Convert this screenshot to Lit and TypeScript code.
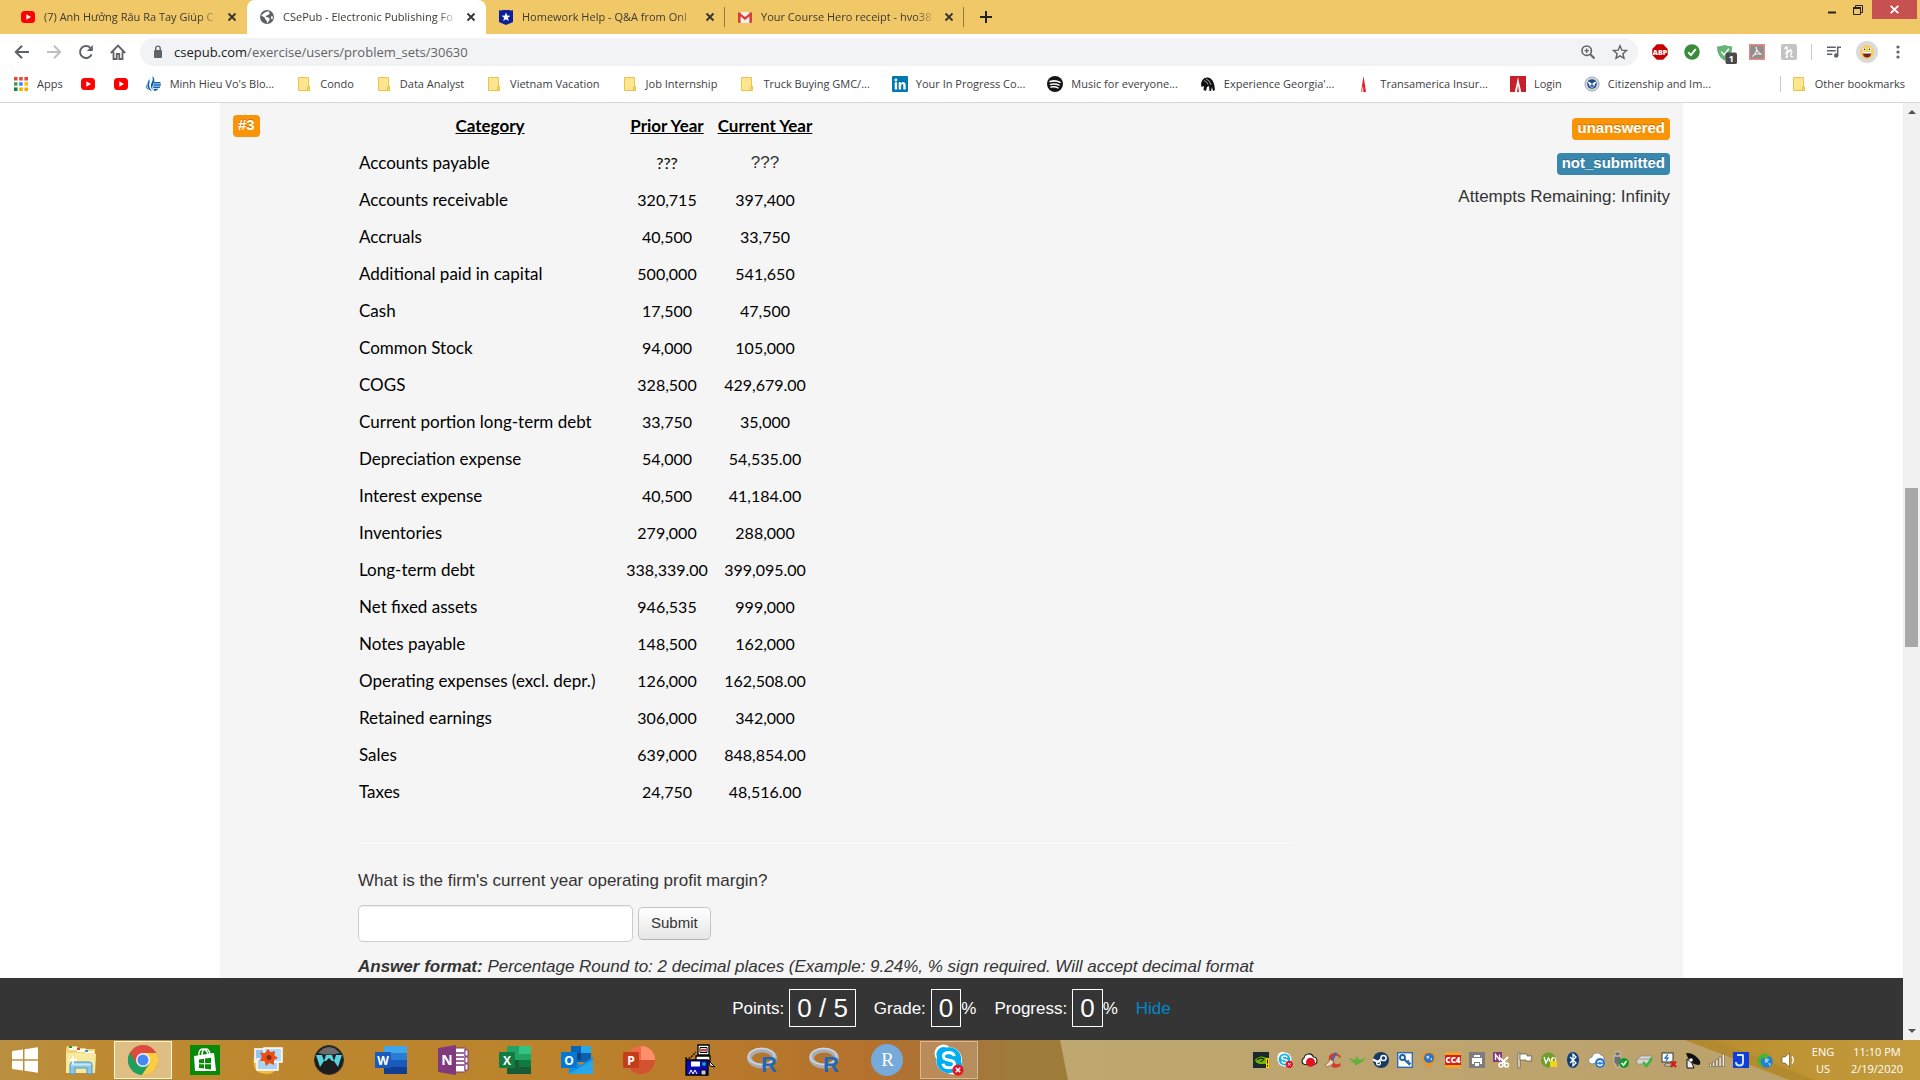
import { LitElement, html, css, svg, nothing, TemplateResult } from "lit";
import { customElement, property } from "lit/decorators.js";

/* ---------- icon drawings ---------- */

type Art = { box: string; art: TemplateResult };
const i = (box: string, art: TemplateResult): Art => ({ box, art });

const ICONS: Record<string, Art> = {
  youtube: i("0 0 16 16", svg`<rect x="1" y="2" width="14" height="12" rx="3.5" fill="#f00"/><path d="M6.3 5.2v5.6L11 8z" fill="#fff"/>`),
  globe: i("0 0 16 16", svg`<circle cx="8" cy="8" r="7" fill="#5f6368"/><path d="M2.2 6.4l3.4 2.2 1 2.2 1.2 1 .4 2.4 2-2.6.6-2L8.600 8.200 6.600 8l1-1.600 2-.6L10.800 4.200 9.600 2.200 6.800 3 4.400 4.600z" fill="#fff"/><path d="M12 7.200l2 .4-.6 3-1.400-1z" fill="#fff"/>`),
  hero: i("0 0 16 16", svg`<path d="M1 1q1.800 1 3.500 0h7q1.700 1 3.500 0v12L8 16l-7-3z" fill="#0b1f9c"/><path d="M8 3.600l1.200 3 3.200.2-2.500 2 .9 3.200L8 10.200 5.200 12l.9-3.200-2.500-2 3.200-.2z" fill="#fff"/>`),
  gmail: i("0 0 16 16", svg`<rect x="1" y="3" width="14" height="11" rx="1" fill="#eee"/><path d="M1 3.600h2.600v10.400H2q-1 0-1-1zM15 3.600h-2.600v10.400H14q1 0 1-1z" fill="#d8402f"/><path d="M1.600 3L8 8l6.400-5 .6 2.600-7 5.400-7-5.400z" fill="#d8402f"/>`),
  close: i("0 0 10 10", svg`<path d="M1.500 1.500l7 7M8.500 1.500l-7 7" stroke="#333" stroke-width="1.800"/>`),
  plus: i("0 0 14 14", svg`<path d="M7 1v12M1 7h12" stroke="#222" stroke-width="2"/>`),
  min: i("0 0 8 8", svg`<path d="M0 6.500h8" stroke="#222" stroke-width="2"/>`),
  restore: i("0 0 10 10", svg`<path d="M2.500 2V.5h7v7H8" fill="none" stroke="#222"/><path d="M.5 2.500h7v7h-7z" fill="none" stroke="#222"/><path d="M0 3h8" stroke="#222" stroke-width="2"/>`),
  winclose: i("0 0 8 8", svg`<path d="M.6.8l6.800 6.400M7.400.8L.6 7.200" stroke="#fff" stroke-width="1.700"/>`),
  back: i("0 0 16 16", svg`<path d="M15 8H2M8 1.800L1.800 8 8 14.200" fill="none" stroke="#5f6368" stroke-width="2"/>`),
  forward: i("0 0 16 16", svg`<path d="M1 8h13M8 1.800L14.200 8 8 14.200" fill="none" stroke="#bdbfc1" stroke-width="2"/>`),
  reload: i("0 0 16 16", svg`<path d="M13.600 10.300A6 6 0 1 1 12.300 3.800" fill="none" stroke="#5f6368" stroke-width="2"/><path d="M14.800 1v6H8.800z" fill="#5f6368"/>`),
  home: i("0 0 16 16", svg`<path d="M3.500 7.500V15h3.200v-5h2.600v5h3.200V7.500M.8 9L8 1.600 15.200 9" fill="none" stroke="#5f6368" stroke-width="1.800"/>`),
  lock: i("0 0 10 14", svg`<rect x="1" y="5" width="8" height="8" rx="1" fill="#5f6368"/><path d="M2.800 5V3.300a2.200 2.200 0 0 1 4.400 0V5" fill="none" stroke="#5f6368" stroke-width="1.400"/>`),
  zoomin: i("0 0 16 16", svg`<circle cx="6.700" cy="6.700" r="4.700" fill="none" stroke="#5f6368" stroke-width="1.600"/><path d="M10.200 10.200L14.500 14.500" stroke="#5f6368" stroke-width="2"/><path d="M6.700 4.500v4.400M4.500 6.700h4.400" stroke="#5f6368" stroke-width="1.300"/>`),
  star: i("0 0 16 16", svg`<path d="M8 1.800l1.800 4.400 4.700.4-3.600 3.100 1.100 4.600L8 11.800 4 14.300l1.100-4.600L1.500 6.600l4.700-.4z" fill="none" stroke="#5f6368" stroke-width="1.400"/>`),
  abp: i("0 0 18 18", svg`<path d="M5.500.3h7l5.200 5.200v7l-5.200 5.200h-7L.3 12.500v-7z" fill="#c80000"/><text x="9" y="12" font-family="Open Sans, sans-serif" font-size="8" font-weight="800" text-anchor="middle" fill="#fff">ABP</text>`),
  check: i("0 0 18 18", svg`<circle cx="9" cy="9" r="8.700" fill="#3a8a3a"/><path d="M4.800 9.400l3 3 5.400-6.600" fill="none" stroke="#fff" stroke-width="2.200"/>`),
  shield: i("0 0 22 22", svg`<path d="M1 2.500Q5.500 2.500 9 1q3.500 1.500 8 1.500Q17 13 9 17.500 1 13 1 2.500z" fill="#67b279"/><path d="M5.500 8l3 3.500 5-6.500" fill="none" stroke="#fff" stroke-width="1.500"/><rect x="10" y="9" width="12" height="12" rx="2" fill="#4a4a4a"/><text x="16" y="18.500" font-family="Open Sans, sans-serif" font-size="10" font-weight="700" text-anchor="middle" fill="#fff">1</text>`),
  pdf: i("0 0 16 16", svg`<rect x=".7" y=".7" width="14.600" height="14.600" fill="#8f8f8f" stroke="#e88a7d" stroke-width="1.400"/><path d="M3.500 12.500C6 11 8.500 6 7.500 3.500 6.500 3 7 7 12.500 10.500 10 9 5.500 10 3.500 12.500z" fill="none" stroke="#f6e3e0" stroke-width="1.200"/>`),
  honey: i("0 0 16 16", svg`<rect width="16" height="16" rx="2" fill="#c3c3c3"/><path d="M6 13V3q-1.500 0-2.500 2M6 8.500q2.500-3.500 4.300-1.700 1 1.200-.6 4.200-.6 2.200 2.300 1.500M4 9.500q4-.5 6-4.500M4.500 13H7" fill="none" stroke="#fff" stroke-width="1.400"/>`),
  queue: i("0 0 18 16", svg`<path d="M1 2.500h10M1 6.500h10M1 10.500h6" stroke="#5f6368" stroke-width="1.800"/><circle cx="11.500" cy="12" r="2.500" fill="#5f6368"/><path d="M13.200 12V2.500H17" fill="none" stroke="#5f6368" stroke-width="1.800"/>`),
  face: i("0 0 22 22", svg`<circle cx="11" cy="11" r="11" fill="#dadada"/><circle cx="11" cy="11" r="7" fill="#f7cf5b"/><circle cx="8.300" cy="8.200" r="1.700" fill="#fff"/><circle cx="13.700" cy="8.200" r="1.700" fill="#fff"/><circle cx="8.500" cy="8.400" r=".8" fill="#333"/><circle cx="13.500" cy="8.400" r=".8" fill="#333"/><path d="M6.300 11h9.400q-.7 5.500-4.700 5.500T6.300 11z" fill="#7a2320"/><path d="M6.300 11h9.400v1.500H6.500z" fill="#fff"/>`),
  dots: i("0 0 4 16", svg`<circle cx="2" cy="3" r="1.600" fill="#5f6368"/><circle cx="2" cy="8" r="1.600" fill="#5f6368"/><circle cx="2" cy="13" r="1.600" fill="#5f6368"/>`),
  apps: i("0 0 16 16", svg`<g transform="translate(1 1)"><path d="M0 0h3.500v3.500H0zM5.200 0h3.500v3.500H5.200zM10.400 0H14v3.500h-3.600z" fill="#ea4335"/><path d="M0 5.200h3.500v3.500H0z" fill="#34a853"/><path d="M5.200 5.200h3.500v3.500H5.200z" fill="#4285f4"/><path d="M10.400 5.200H14v3.500h-3.600z" fill="#fbbc05"/><path d="M0 10.400h3.500V14H0z" fill="#188038"/><path d="M5.200 10.400h3.500V14H5.200zM10.400 10.400H14V14h-3.600z" fill="#f9ab00"/></g>`),
  gsu: i("0 0 16 16", svg`<path d="M6.500 0q3.500 3.500.5 8.500-1 2-.5 5.500Q3.800 10.500 5.500 7 7.500 3.500 6.500 0z" fill="#0b5fae"/><path d="M3.300 3q.8 2-.1 5Q2.500 11 6 15.500 1.500 13.500 1.300 9 1.300 6.500 3.300 3z" fill="#0b5fae"/><path d="M1 7Q-.5 11 3 14 0 13 0 10z" fill="#0b5fae"/><path d="M8 6h6.500v1.500H7.600zM7.400 8.200H15q0 1-.3 1.500H7.200zM7.200 10.500h7.200q-.4 1-1 1.500H7.400zM7.600 12.800H12.600q-2 2.200-4.600 2.200z" fill="#0b5fae"/>`),
  folder: i("0 0 16 16", svg`<path d="M2.500 1.500h10v9h1v4h-11z" fill="#fde68f" stroke="#e9c34a"/><path d="M11.500 14.500v-3q0-1 1-1t1 1v3z" fill="#fbd55a" stroke="#e9c34a"/>`),
  linkedin: i("0 0 16 16", svg`<rect width="16" height="16" rx="1" fill="#0077b5"/><circle cx="3.900" cy="4" r="1.400" fill="#fff"/><path d="M2.700 6.300h2.400v7.200H2.700zM6.700 6.300H9v1q2-2 3.800-.6.900.8.900 2.500v4.300h-2.400V9.600q0-1.500-1-1.500T9.100 9.600v3.900H6.700z" fill="#fff"/>`),
  spotify: i("0 0 16 16", svg`<circle cx="8" cy="8" r="8" fill="#191414"/><path d="M3 5.500q5.500-1.600 10 .9M3.500 8.400q4.700-1.300 8.500.8M4 11q3.800-.9 7 .8" fill="none" stroke="#fff" stroke-width="1.500" stroke-linecap="round"/>`),
  rugby: i("0 0 16 16", svg`<path d="M1 8Q2 1 8 1.500 14 2 15 14l-2 1-1-4-1 4H9.500L9 10l-2 1-1 4-2.500-1L4 10 1.500 11z" fill="#111"/><path d="M6 3q4 1 5 6M4 4.500q3 1 4 4" fill="none" stroke="#fff" stroke-width=".6"/>`),
  spire: i("0 0 16 16", svg`<path d="M7.500 0L10 16H5z" fill="#e21a22"/><path d="M7 9.500L7.600 16H5z" fill="#f7b5b5"/>`),
  login: i("0 0 16 16", svg`<rect width="16" height="16" fill="#c5202b"/><path d="M8 1l1.200 6 2 9H9L8 9l-1 7H4.800l2-9z" fill="#fff"/>`),
  seal: i("0 0 16 16", svg`<circle cx="8" cy="8" r="7.500" fill="#d5d9df"/><circle cx="8" cy="8" r="7" fill="none" stroke="#a7afbb"/><circle cx="8" cy="8" r="4.800" fill="#1f4b86"/><path d="M3.500 5.500q3 0 4.500 2.500 1.500-2.500 4.500-2.500L10 10.500l-2 1.800-2-1.800z" fill="#fff"/><path d="M6.500 8.500h3v2L8 11.800l-1.500-1.300z" fill="#2f5f9c"/>`),

  windows: i("0 0 28 26", svg`<path d="M1 4l11-1.600V12.300H1zM13.500 2.200L27 .3v12H13.500zM1 13.700h11v9.900L1 22zM13.500 13.700H27v12L13.500 23.800z" fill="#fff"/>`),
  explorer: i("0 0 32 32", svg`<path d="M1 5l1-3h10l1 2h7l1 1h9v23H1z" fill="#eed676"/><path d="M4 3h8v3H4zM12 5h9v3h-9zM20 7h9v3h-9z" fill="#fffef0"/><path d="M4 2h3v2H4z" fill="#1a9a48"/><path d="M12 4h3v2h-3z" fill="#d24a2a"/><path d="M20 6h3v2h-3z" fill="#2f8fe0"/><path d="M1 9h29l1 2-1 18H1z" fill="#f8e9a0"/><path d="M5 30V21q0-3 3-3h16q3 0 3 3v9h-5v-6H10v6z" fill="#8cc7e6" stroke="#4c9ac4"/><path d="M6 19.500h20v2H6z" fill="#c9e8f7"/><path d="M8 12v8M4 16h8" stroke="#fff" stroke-width="1.500"/>`),
  chrome: i("0 0 32 32", svg`<circle cx="16" cy="16" r="15" fill="#dd4b3e"/><path d="M3 8.500L9.500 20 16 31A15 15 0 0 1 3 8.500z" fill="#1aa15f"/><path d="M9 18l13.500 1.500L15 31z" fill="#1aa15f"/><path d="M16 9h13.300A15 15 0 0 1 15 31l7.500-11.500z" fill="#ffcd42"/><circle cx="16" cy="16" r="7" fill="#f4f4f4"/><circle cx="16" cy="16" r="5.500" fill="#4587f4"/>`),
  store: i("0 0 32 32", svg`<rect x="1" y="1" width="30" height="30" fill="#078a07"/><path d="M5 12l20-3 2 18H6z" fill="#fff"/><path d="M10 13q-1-8 4-8 3 0 5 5M13 11q0-6 4-6 3 0 4 5" fill="none" stroke="#fff" stroke-width="1.500"/><path d="M10 15.500l5-.7v4.400h-5zM16 14.600l6-.8v5.400h-6zM10 20.200h5v4.300l-5-.5zM16 20.200h6v5.300l-6-.8z" fill="#078a07"/>`),
  gallery: i("0 0 32 32", svg`<path d="M3 14q-3 15 12 16 8 0 10-5-15 5-18-10z" fill="#f7b944"/><rect x="4" y="5" width="16" height="13" fill="#8ec6f0" stroke="#fff" stroke-width="1.500"/><rect x="6" y="15" width="21" height="11" fill="#a9d3ef" stroke="#fff" stroke-width="1.500"/><rect x="13" y="4" width="18" height="14" fill="#b9dcf5" stroke="#fff" stroke-width="1.500"/><path d="M17 5l2.500 3L24 7l-.5 4.500L27 14l-4 2 0 5-4.500-2-3.500 3-1.500-4.500-5-1L11 13 9 8.500l5 .5z" fill="#e8501c"/><circle cx="18" cy="13.500" r="2.500" fill="#8c2a0c"/>`),
  wave: i("0 0 32 32", svg`<circle cx="16" cy="16" r="14.500" fill="#1d1d1d" stroke="#333"/><path d="M5 9q11-12 22 0-11 3-22 0z" fill="#6b6b6b"/><path d="M3 11h6l2 6 2-6h6l2 6 2-6h6l-4 12-4-6-2 0-3-3-3 3-2 0-4 6z" fill="#58d2de"/>`),
  word: i("0 0 32 32", svg`<rect x="9" y="2" width="23" height="7" fill="#41a5ee"/><rect x="9" y="9" width="23" height="7" fill="#2b7cd3"/><rect x="9" y="16" width="23" height="7" fill="#185abd"/><rect x="9" y="23" width="23" height="7" fill="#103f91"/><rect y="8" width="16" height="16" rx="1" fill="#185abd"/><text x="8" y="20.500" font-family="Open Sans, sans-serif" font-size="12" font-weight="700" text-anchor="middle" fill="#fff">W</text>`),
  onenote: i("0 0 32 32", svg`<path d="M17 4h11v24H17z" fill="#fff" stroke="#80397b"/><path d="M19 9h8M19 13h8M19 17h8M19 21h8" stroke="#80397b" stroke-width="1.500"/><path d="M28 6h3v6h-3zM28 13h3v6h-3zM28 20h3v6h-3z" fill="#fff" stroke="#80397b"/><path d="M1 4l18-3v30L1 28z" fill="#80397b"/><text x="10" y="21" font-family="Open Sans, sans-serif" font-size="14" font-weight="700" text-anchor="middle" fill="#fff">N</text>`),
  excel: i("0 0 32 32", svg`<rect x="8" y="2" width="24" height="28" fill="#21a366"/><rect x="20" y="2" width="12" height="8" fill="#33c481"/><rect x="8" y="16" width="12" height="14" fill="#185c37"/><rect x="20" y="16" width="12" height="7" fill="#107c41"/><rect x="20" y="23" width="12" height="7" fill="#185c37"/><rect y="8" width="16" height="16" rx="1" fill="#107c41"/><text x="8" y="20.500" font-family="Open Sans, sans-serif" font-size="12" font-weight="700" text-anchor="middle" fill="#fff">X</text>`),
  outlook: i("0 0 32 32", svg`<path d="M10 2h20v16H10z" fill="#0364b8"/><path d="M20 2h10v7H20z" fill="#28a8ea"/><path d="M10 9h10v7H10z" fill="#14447d"/><path d="M20 9h10v7H20z" fill="#0a5fb0"/><path d="M8 13l12 8 12-8v17H8z" fill="#1490df"/><path d="M8 30l24-14v14z" fill="#28a8ea"/><rect y="8" width="16" height="16" rx="1" fill="#0078d4"/><text x="8" y="20.500" font-family="Open Sans, sans-serif" font-size="12" font-weight="700" text-anchor="middle" fill="#fff">O</text>`),
  powerpoint: i("0 0 32 32", svg`<circle cx="18" cy="16" r="14" fill="#ed6c47"/><path d="M18 2a14 14 0 0 1 14 14H18z" fill="#ff8f6b"/><path d="M4 16h28a14 14 0 0 1-28 0z" fill="#d35230"/><rect y="8" width="16" height="16" rx="1" fill="#c43e1c"/><text x="8" y="20.500" font-family="Open Sans, sans-serif" font-size="12" font-weight="700" text-anchor="middle" fill="#fff">P</text>`),
  terminal: i("0 0 32 32", svg`<path d="M13 1h11v10H13zM11 12h14v5H11z" fill="#fff" stroke="#000" stroke-width="1.300"/><path d="M15 3.500h7v5h-7z" fill="#fff" stroke="#000"/><path d="M16 5h5v2.500h-5z" fill="#e03a3a"/><path d="M1 13v3l5-3 5-5" fill="none" stroke="#000" stroke-width="1.300" stroke-dasharray="2 1"/><path d="M1 16h22v15H1z" fill="#0b0bb0" stroke="#000" stroke-width="1.300"/><path d="M6 17.500h9v5H6z" fill="#fff"/><circle cx="19" cy="20" r="2" fill="#0aa"/><path d="M4 30l2-4 2 4 2-4 2 4" stroke="#fff" fill="none"/><path d="M16 26h5v5h-5z" fill="#ccc" stroke="#000"/><path d="M24 17l6 6-5-1z" fill="#fff" stroke="#000"/>`),
  rlang: i("0 0 32 32", svg`<ellipse cx="15" cy="14" rx="12.500" ry="8" fill="none" stroke="#a9adb5" stroke-width="5"/><ellipse cx="14.500" cy="12.500" rx="13" ry="8" fill="none" stroke="#d6d9dd" stroke-width="1.500"/><text x="22" y="28" font-family="Liberation Sans, sans-serif" font-size="22" font-weight="700" text-anchor="middle" fill="#2266b8">R</text>`),
  rstudio: i("0 0 32 32", svg`<circle cx="16" cy="16" r="16" fill="#75aadb"/><text x="16.500" y="22" font-family="Liberation Serif, serif" font-size="19" text-anchor="middle" fill="#fff">R</text>`),
  skype: i("0 0 32 32", svg`<circle cx="10.500" cy="9.500" r="9" fill="#fff"/><circle cx="20" cy="21" r="9.500" fill="#fff"/><circle cx="16" cy="16" r="13" fill="#fff"/><path d="M5 6a7 7 0 0 1 8-2.500A12.300 12.300 0 0 1 28 18a7 7 0 0 1-9 10.500A12.300 12.300 0 0 1 4 13a7 7 0 0 1 1-7z" fill="#00aff0"/><path d="M21.500 12Q20 8.500 15.500 8.500q-5 .3-5 3.800 0 3 5 3.700 6 .8 6 4-.2 3.800-5.500 3.800t-6-4" fill="none" stroke="#fff" stroke-width="3"/><circle cx="25" cy="26" r="5.500" fill="#e81123"/><path d="M22.800 23.800l4.400 4.400M27.200 23.800l-4.400 4.400" stroke="#fff" stroke-width="1.500"/>`),

  nvidia: i("0 0 16 16", svg`<rect width="16" height="16" fill="#1b2a2e"/><path d="M2 8q5-6 12-2v6H7Q3 11.500 2 8z" fill="#76b900"/><path d="M4 8q3-3 7-1-2 3-4 2" fill="none" stroke="#12300a" stroke-width="1.200"/><path d="M13 6h3v10h-3z" fill="#ffd200"/><path d="M14 7.500h1v4h-1zM14 13h1v1.500h-1z" fill="#111"/>`),
  skypesmall: i("0 0 16 16", svg`<circle cx="5.500" cy="5" r="5" fill="#fff"/><circle cx="7.500" cy="7.500" r="7" fill="#fff"/><circle cx="7.500" cy="7.500" r="5.900" fill="#1fb1ea"/><path d="M10.300 5.500Q9.500 4 7.500 4 5 4.200 5 5.700t2.500 1.700q3 .3 2.900 2Q10.200 11 7.700 11T4.800 9.400" fill="none" stroke="#fff" stroke-width="1.500"/><circle cx="12.300" cy="12.300" r="3.600" fill="#e81123"/><path d="M11 11l2.700 2.700M13.700 11L11 13.700" stroke="#fff"/>`),
  cloud: i("0 0 16 16", svg`<path d="M3.500 12.500a3.500 3.500 0 0 1-.5-6.500A5 5 0 0 1 12.500 5a3.800 3.800 0 0 1 .5 7.500z" fill="#fff" stroke="#222" stroke-width="1.200"/><circle cx="9.500" cy="10.300" r="4.500" fill="#e0121c"/>`),
  cleaner: i("0 0 16 16", svg`<path d="M15.500 4Q11-1 6 2T7 15q4 2 8.500-1v-3q-4 2.500-6 0T9.500 5t6 1.500z" fill="#d63a2c"/><path d="M10.500 0l1.500 1L8 9 6.500 7.500z" fill="#2f6fc0"/><path d="M0 13q4-2 5-6l4 3q-2 4-7 5z" fill="#e8d9c4" stroke="#8a5a2a" stroke-width=".7"/>`),
  genie: i("0 0 16 16", svg`<path d="M0 6q3 0 5 2l2-1.500V5h2v1.500L11 8q2-.5 5-2.500-1 4-4 5L9 12v1H6v-1L3 9.500z" fill="#5fb33a"/>`),
  steam: i("0 0 16 16", svg`<circle cx="8" cy="8" r="8" fill="#153a66"/><circle cx="10.500" cy="6" r="2.600" fill="none" stroke="#fff" stroke-width="1.500"/><circle cx="5.500" cy="11" r="1.900" fill="none" stroke="#fff" stroke-width="1.300"/><path d="M0 7.500l5 2.500 3-3" fill="none" stroke="#fff" stroke-width="2"/>`),
  key: i("0 0 16 16", svg`<rect x=".7" y=".7" width="14.600" height="14.600" fill="#fff" stroke="#2f6fb0" stroke-width="1.400"/><circle cx="5.500" cy="5.500" r="2.500" fill="none" stroke="#1d5ea6" stroke-width="1.800"/><path d="M7 7l6 6M10 10l2-1.500M12 12l1.500-1.500" stroke="#1d5ea6" stroke-width="1.800"/>`),
  pin: i("0 0 16 16", svg`<path d="M8 16L2.500 9.500a6.700 6.700 0 1 1 11 0z" fill="#f0931e"/><circle cx="8" cy="6" r="5" fill="#2f74c0"/><path d="M5 4.500l2.500-1 1 2-2 1.500zM9 7l2-1v2.500z" fill="#bfe0f5"/>`),
  cc4: i("0 0 16 16", svg`<rect width="16" height="16" fill="#d61c14"/><path d="M0 0h16v3H0zM0 13h16v3H0z" fill="#f0a52c"/><text x="8" y="11" font-family="Open Sans, sans-serif" font-size="8" font-weight="800" text-anchor="middle" fill="#fff">CC4</text>`),
  printer: i("0 0 16 16", svg`<rect width="16" height="16" fill="#7d7d7d"/><path d="M5 3h6v2H5zM3 6h10v6h-2v-2H5v2H3zM6 11h4v3H6z" fill="#fff"/>`),
  clip: i("0 0 16 16", svg`<rect width="9" height="10" fill="#80397b"/><path d="M2.500 8V2.500L6.500 8V2.500" fill="none" stroke="#fff" stroke-width="1.300"/><path d="M7 6l6 6M15 5l-6 6" stroke="#fff" stroke-width="2"/><circle cx="8" cy="13" r="2" fill="none" stroke="#fff" stroke-width="1.500"/><circle cx="13.500" cy="13" r="2" fill="none" stroke="#fff" stroke-width="1.500"/>`),
  flag: i("0 0 16 16", svg`<path d="M1 1h2v15H1z" fill="#fff" stroke="#4a4030" stroke-width=".6"/><path d="M3 2h7v2h5l-1 3 1 2H9V8H3z" fill="#fff" stroke="#4a4030" stroke-width=".6"/>`),
  webroot: i("0 0 16 16", svg`<circle cx="7.500" cy="8" r="7.500" fill="#6a9e28"/><path d="M3 5l2 6 2.500-5L10 11l2-6" fill="none" stroke="#fff" stroke-width="1.300"/><path d="M9 9h7v6H9z" fill="#f2d21c"/><path d="M10.500 9V7.500a2 2 0 0 1 4 0V9" fill="none" stroke="#f5f5d0" stroke-width="1.200"/>`),
  bluetooth: i("0 0 16 16", svg`<ellipse cx="8" cy="8" rx="6" ry="8" fill="#0d3f7c"/><path d="M5 5l6 6-3 2.700V2.300L11 5l-6 6" fill="none" stroke="#fff" stroke-width="1.300"/>`),
  sync: i("0 0 16 16", svg`<path d="M3 12a3.500 3.500 0 0 1 0-7 5 5 0 0 1 9-2 3.500 3.500 0 0 1 2 6z" fill="#fff" stroke="#777" stroke-width=".8"/><circle cx="11" cy="11" r="5" fill="#2d7ad0"/><path d="M8.500 10.500q2.500-3 5 0M13.500 12q-2.500 3-5 0" fill="none" stroke="#fff" stroke-width="1.300"/>`),
  usb: i("0 0 16 16", svg`<path d="M2 0h5v4H2zM1 4h7v7q0 1-2 1v3H3v-3q-2 0-2-1z" fill="#6f6f6f" stroke="#ddd" stroke-width=".6"/><circle cx="11" cy="11" r="5" fill="#159a2c"/><path d="M8.500 11l2 2 3-4" fill="none" stroke="#fff" stroke-width="1.500"/>`),
  drive: i("0 0 16 16", svg`<path d="M0 7l4-3h11l-2 3v5H0z" fill="#d9d9d9" stroke="#888" stroke-width=".7"/><path d="M0 7h13" stroke="#888" stroke-width=".8"/><path d="M6 10l3.500 4L15 6" fill="none" stroke="#3cb53c" stroke-width="2.500"/>`),
  power: i("0 0 16 16", svg`<rect x="1" y="1" width="11" height="9" fill="#fff" stroke="#333"/><path d="M7 2.500l-3 3.500h3L5 9" fill="none" stroke="#1a78d0" stroke-width="1.300"/><path d="M4 12h6v2H4z" fill="#fff" stroke="#333" stroke-width=".7"/><path d="M10 9.500l5 5.500M15 9.500L10 15" stroke="#d11" stroke-width="2"/>`),
  dish: i("0 0 16 16", svg`<path d="M1 1q8-1 14 8 1 4-2 4-9-1-12-12z" fill="#111"/><path d="M2 7l5 4 2 5H2z" fill="#eee" stroke="#111"/><circle cx="6" cy="8" r="1.800" fill="#fff"/>`),
  signal: i("0 0 16 16", svg`<path d="M.5 12h2v2.500h-2zM3.700 10h2v4.500h-2zM6.900 7.500h2v7h-2zM10.100 5h2v9.500h-2zM13.300 2h2v12.500h-2z" fill="#fff" stroke="#4a3c20" stroke-width=".5"/>`),
  jtool: i("0 0 16 16", svg`<rect width="16" height="16" fill="#0f3fd8"/><path d="M4 3h6.500M10 3v7q0 3.500-3.500 3.500T3 10" fill="none" stroke="#cfe3ff" stroke-width="2"/>`),
  earth: i("0 0 16 16", svg`<circle cx="9.500" cy="9.500" r="6.300" fill="#2580d0"/><path d="M8 6l4 1-1 3-3 1zM11 11l3 .5-1 3z" fill="#8fd0f5"/><path d="M4 14.500Q-1 10 1 6q2-4 6-4V0l5 4-5 4V5.500Q4 6 3.500 9q0 3 2.500 5z" fill="#46b52c"/>`),
  speaker: i("0 0 16 16", svg`<path d="M1 5h3l4.500-4v14L4 11H1z" fill="#fff" stroke="#5a4a28" stroke-width=".6"/><path d="M11 4.500q2.500 3.500 0 7" fill="none" stroke="#fff" stroke-width="1.400"/>`),
  up: i("0 0 8 4", svg`<path d="M0 4l4-4 4 4z" fill="#505050"/>`),
  down: i("0 0 8 4", svg`<path d="M0 0l4 4 4-4z" fill="#505050"/>`),
};

@customElement("ui-icon")
class UiIcon extends LitElement {
  @property() name = "";
  @property({ type: Number }) size = 16;
  static styles = css`
    :host { display: block; flex: none; }
    svg { display: block; overflow: visible; }
  `;
  render() {
    const icon = ICONS[this.name];
    if (!icon) return nothing;
    const [, , w, h] = icon.box.split(" ").map(Number);
    return html`<svg width=${this.size} height=${Math.round((this.size * h) / w)} viewBox=${icon.box} aria-hidden="true">${icon.art}</svg>`;
  }
}

/* ---------- browser window ---------- */

const TABS = [
  { icon: "youtube", title: "(7) Anh Hưởng Râu Ra Tay Giúp C" },
  { icon: "globe", title: "CSePub - Electronic Publishing Fo", active: true },
  { icon: "hero", title: "Homework Help - Q&A from Onl" },
  { icon: "gmail", title: "Your Course Hero receipt - hvo38" },
];

const BOOKMARKS = [
  { icon: "apps", label: "Apps" },
  { icon: "youtube", label: "" },
  { icon: "youtube", label: "" },
  { icon: "gsu", label: "Minh Hieu Vo's Blo..." },
  { icon: "folder", label: "Condo" },
  { icon: "folder", label: "Data Analyst" },
  { icon: "folder", label: "Vietnam Vacation" },
  { icon: "folder", label: "Job Internship" },
  { icon: "folder", label: "Truck Buying GMC/..." },
  { icon: "linkedin", label: "Your In Progress Co..." },
  { icon: "spotify", label: "Music for everyone..." },
  { icon: "rugby", label: "Experience Georgia'..." },
  { icon: "spire", label: "Transamerica Insur..." },
  { icon: "login", label: "Login" },
  { icon: "seal", label: "Citizenship and Im..." },
];

@customElement("browser-chrome")
class BrowserChrome extends LitElement {
  static styles = css`
    :host { display: block; font: 11px/16px "Open Sans", sans-serif; color: #3c4043; background: #fff; border-bottom: 1px solid #d6d6d6; }
    button { border: 0; padding: 0; background: none; display: grid; place-items: center; flex: none; }
    a { color: inherit; text-decoration: none; }
    .strip { display: flex; height: 34px; background: #f0c868; padding-left: 8px; }
    .tab { display: flex; align-items: center; width: 239px; box-sizing: border-box; padding: 0 10px 0 12px; gap: 8px; position: relative; color: #3c3a33; }
    .tab.line::after { content: ""; position: absolute; right: 0; top: 7px; height: 20px; width: 1px; background: #8f7a48; }
    .tab.active { background: #fff; border-radius: 8px 8px 0 0; }
    .title { flex: 1; white-space: nowrap; mask-image: linear-gradient(to left, transparent, #000 20px); }
    .tab button { width: 10px; }
    .new { width: 44px; }
    .window { margin-left: auto; display: flex; align-items: flex-start; padding-right: 3px; }
    .window button { width: 26px; height: 19px; }
    .window .x { width: 45px; background: #c75050; margin-left: 1px; }
    .tools { display: flex; align-items: center; height: 36px; padding: 0 20px 0 14px; }
    .nav { display: flex; gap: 16px; margin-right: 14px; }
    .omni { flex: 1; display: flex; align-items: center; gap: 11px; height: 28px; border-radius: 14px; background: #f1f3f4; padding: 0 10px 0 13px; }
    .field { flex: 1; display: grid; font-size: 13px; line-height: 20px; }
    .field input, .field span { grid-area: 1 / 1; padding: 0; font: inherit; }
    .field input { border: 0; background: none; outline: 0; }
    .field span { color: #5f6368; pointer-events: none; }
    .field b { font-weight: 400; color: #202124; }
    .omni .right { display: flex; gap: 16px; }
    .ext { display: flex; align-items: center; gap: 16px; margin-left: 14px; }
    .ext .wide { margin: 4px -4px 0 0; }
    .ext .bar { margin: 0 -2px; }
    .ext .avatar { margin: 0 2px 0 -2px; }
    .bar { width: 1px; height: 16px; background: #c8cacd; }
    .marks { display: flex; align-items: center; height: 32px; padding: 0 15px 4px 13px; gap: 22px; box-sizing: border-box; }
    .mark { display: flex; align-items: center; gap: 8px; white-space: nowrap; }
    .icononly, .icononly + .mark { margin-left: -5px; }
    .other { margin-left: auto; display: flex; align-items: center; gap: 10px; }
  `;
  render() {
    return html`
      <div class="strip">
        ${TABS.map(
          (t, n) => html`<div class="tab ${t.active ? "active" : ""} ${n > 1 ? "line" : ""}">
            <ui-icon name=${t.icon}></ui-icon><span class="title">${t.title}</span>
            <button aria-label="Close tab"><ui-icon name="close" size="10"></ui-icon></button>
          </div>`
        )}
        <button class="new" aria-label="New tab"><ui-icon name="plus" size="14"></ui-icon></button>
        <div class="window">
          <button aria-label="Minimize"><ui-icon name="min" size="8"></ui-icon></button>
          <button aria-label="Restore"><ui-icon name="restore" size="10"></ui-icon></button>
          <button class="x" aria-label="Close"><ui-icon name="winclose" size="9"></ui-icon></button>
        </div>
      </div>
      <div class="tools">
        <div class="nav">
          ${["back", "forward", "reload", "home"].map((n) => html`<button aria-label=${n}><ui-icon name=${n}></ui-icon></button>`)}
        </div>
        <div class="omni">
          <ui-icon name="lock" size="10"></ui-icon>
          <div class="field">
            <input aria-label="Address" />
            <span><b>csepub.com</b>/exercise/users/problem_sets/30630</span>
          </div>
          <div class="right">
            <button aria-label="Zoom"><ui-icon name="zoomin"></ui-icon></button>
            <button aria-label="Bookmark"><ui-icon name="star"></ui-icon></button>
          </div>
        </div>
        <div class="ext">
          <ui-icon name="abp"></ui-icon>
          <ui-icon name="check"></ui-icon>
          <ui-icon class="wide" name="shield" size="21"></ui-icon>
          <ui-icon name="pdf"></ui-icon>
          <ui-icon name="honey"></ui-icon>
          <span class="bar"></span>
          <ui-icon name="queue"></ui-icon>
          <ui-icon class="avatar" name="face" size="22"></ui-icon>
          <button aria-label="Menu"><ui-icon name="dots" size="4"></ui-icon></button>
        </div>
      </div>
      <nav class="marks">
        ${BOOKMARKS.map(
          (b) => html`<a class="mark ${b.label ? "" : "icononly"}" href="#" aria-label=${b.label || b.icon}>
            <ui-icon name=${b.icon}></ui-icon>${b.label ? html`<span>${b.label}</span>` : nothing}
          </a>`
        )}
        <span class="other"><span class="bar"></span><a class="mark" href="#"><ui-icon name="folder"></ui-icon><span>Other bookmarks</span></a></span>
      </nav>
    `;
  }
}

/* ---------- problem page ---------- */

const ROWS: [string, string, string][] = [
  ["Accounts payable", "???", "???"],
  ["Accounts receivable", "320,715", "397,400"],
  ["Accruals", "40,500", "33,750"],
  ["Additional paid in capital", "500,000", "541,650"],
  ["Cash", "17,500", "47,500"],
  ["Common Stock", "94,000", "105,000"],
  ["COGS", "328,500", "429,679.00"],
  ["Current portion long-term debt", "33,750", "35,000"],
  ["Depreciation expense", "54,000", "54,535.00"],
  ["Interest expense", "40,500", "41,184.00"],
  ["Inventories", "279,000", "288,000"],
  ["Long-term debt", "338,339.00", "399,095.00"],
  ["Net fixed assets", "946,535", "999,000"],
  ["Notes payable", "148,500", "162,000"],
  ["Operating expenses (excl. depr.)", "126,000", "162,508.00"],
  ["Retained earnings", "306,000", "342,000"],
  ["Sales", "639,000", "848,854.00"],
  ["Taxes", "24,750", "48,516.00"],
];

@customElement("problem-page")
class ProblemPage extends LitElement {
  static styles = css`
    :host { display: flex; flex: 1; min-height: 0; font: 17px/25px "Liberation Sans", Arial, sans-serif; color: #333; }
    .view { flex: 1; min-width: 0; display: flex; flex-direction: column; }
    .scroll { flex: 1; min-height: 0; overflow: hidden; background: #fff; }
    .panel { box-sizing: border-box; max-width: 1463px; min-height: 100%; margin: 0 auto; padding: 4px 13px 0; background: #f5f5f5; display: grid; grid-template-columns: 125px minmax(0, 1fr) 378px; }
    .badge { display: inline-block; padding: 2px 5px 4px; border-radius: 4px; color: #fff; font: 700 15px/16px "Liberation Sans", Arial, sans-serif; text-shadow: 0 -1px 0 rgba(0, 0, 0, 0.25); background: #f89406; }
    .badge.info { background: #3a87ad; }
    .number { padding-top: 5px; }
    table { border-collapse: collapse; table-layout: fixed; width: 460px; font: 16px/21px Lato, Carlito, sans-serif; color: #000; font-variant-numeric: tabular-nums; }
    th, td { padding: 8px 0; height: 21px; text-align: center; white-space: nowrap; }
    th { text-decoration: underline; font-weight: 700; font-size: 17px; }
    .name { width: 264px; font-size: 17px; }
    .prior { width: 90px; }
    td.name { text-align: left; padding-left: 1px; }
    td.plain { font: 17px/21px "Liberation Sans", Arial, sans-serif; color: #333; }
    hr { margin: 31px 0 25px; border: 0; border-top: 1px solid #eee; border-bottom: 1px solid #fff; }
    label { display: block; }
    form { display: flex; align-items: center; gap: 5px; margin: 12px 0; }
    input { box-sizing: border-box; width: 275px; height: 37px; border: 1px solid #ccc; border-radius: 5px; padding: 5px 8px; font: inherit; box-shadow: inset 0 1px 1px rgba(0, 0, 0, 0.075); }
    form button { height: 33px; padding: 0 12px 2px; border: 1px solid #c5c5c5; border-bottom-color: #b3b3b3; border-radius: 5px; background: linear-gradient(#fff, #e6e6e6); font: 15px/20px "Liberation Sans", Arial, sans-serif; color: #333; }
    .format { margin: 0; font-style: italic; white-space: nowrap; }
    .status { display: flex; flex-direction: column; align-items: flex-end; gap: 13px; padding-top: 11px; line-height: 18px; }
    .score { box-sizing: border-box; flex: none; height: 62px; padding-bottom: 2px; background: #353535; color: #fff; display: flex; align-items: center; justify-content: center; gap: 18px; }
    .score div { display: flex; align-items: center; }
    .score output { border: 1px solid #fff; padding: 0 7px; margin-left: 5px; font-size: 26px; line-height: 36px; white-space: pre; }
    .score a { color: #08c; text-decoration: none; }
    .rail { width: 17px; background: #f1f1f1; display: flex; flex-direction: column; align-items: center; padding: 7px 0; box-sizing: border-box; }
    .track { flex: 1; width: 13px; display: grid; grid-template-rows: 373fr 158fr 381fr; }
    .thumb { grid-row: 2; background: #a8a8a8; }
  `;
  render() {
    return html`
      <div class="view">
        <div class="scroll">
          <main class="panel">
            <div class="number"><span class="badge">#3</span></div>
            <div>
              <table>
                <thead><tr><th class="name">Category</th><th class="prior">Prior Year</th><th>Current Year</th></tr></thead>
                <tbody>
                  ${ROWS.map(([name, prior, current], n) => html`<tr><td class="name">${name}</td><td>${prior}</td><td class=${n === 0 ? "plain" : ""}>${current}</td></tr>`)}
                </tbody>
              </table>
              <hr />
              <label for="answer">What is the firm's current year operating profit margin?</label>
              <form @submit=${(e: Event) => e.preventDefault()}>
                <input id="answer" type="text" /><button type="submit">Submit</button>
              </form>
              <p class="format"><b>Answer format:</b> Percentage Round to: 2 decimal places (Example: 9.24%, % sign required. Will accept decimal format</p>
            </div>
            <div class="status">
              <span class="badge">unanswered</span>
              <span class="badge info">not_submitted</span>
              <span>Attempts Remaining: Infinity</span>
            </div>
          </main>
        </div>
        <div class="score">
          <div>Points:<output>0 / 5</output></div>
          <div>Grade:<output>0</output>%</div>
          <div>Progress:<output>0</output>%</div>
          <a href="#">Hide</a>
        </div>
      </div>
      <div class="rail">
        <ui-icon name="up" size="8"></ui-icon>
        <div class="track"><div class="thumb"></div></div>
        <ui-icon name="down" size="8"></ui-icon>
      </div>
    `;
  }
}

/* ---------- desktop taskbar ---------- */

const PINNED = ["explorer", "chrome", "store", "gallery", "wave", "word", "onenote", "excel", "outlook", "powerpoint", "terminal", "rlang", "rlang", "rstudio", "skype"];
const TRAY = ["nvidia", "skypesmall", "cloud", "cleaner", "genie", "steam", "key", "pin", "cc4", "printer", "clip", "flag", "webroot", "bluetooth", "sync", "usb", "drive", "power", "dish", "signal", "jtool", "earth", "speaker"];

@customElement("task-bar")
class TaskBar extends LitElement {
  static styles = css`
    :host { display: flex; align-items: center; height: 40px; font: 11px/17px "Open Sans", sans-serif; color: #fff; position: relative; }
    .wood { position: absolute; inset: 0; width: 100%; height: 100%; }
    button { border: 0; padding: 0; background: none; display: grid; place-items: center; height: 38px; box-sizing: border-box; }
    .start { width: 50px; position: relative; }
    .apps { display: flex; gap: 4px; margin-left: 2px; position: relative; }
    .apps button { width: 58px; }
    .apps .open { border: 1px solid rgba(255, 255, 255, 0.4); background: rgba(255, 255, 255, 0.18); }
    .apps .focus { border: 1px solid #fff8e0; background: rgba(255, 244, 214, 0.5); }
    .tray { margin-left: auto; display: flex; gap: 8px; position: relative; }
    .text { position: relative; text-align: center; }
    .lang { margin-left: 12px; width: 28px; }
    .clock { margin: 0 12px 0 9px; width: 62px; }
  `;
  render() {
    return html`
      <svg class="wood" viewBox="0 0 1920 40" preserveAspectRatio="none" aria-hidden="true">
        <defs>
          <linearGradient id="w"><stop offset="0" stop-color="#b99040"/><stop offset=".05" stop-color="#bd8a32"/><stop offset=".3" stop-color="#bb822b"/><stop offset=".45" stop-color="#b4712c"/><stop offset=".5" stop-color="#a8733a"/><stop offset=".53" stop-color="#9d7c3a"/><stop offset="1" stop-color="#9d7c3a"/></linearGradient>
          <linearGradient id="s"><stop offset="0" stop-color="#bfa772"/><stop offset="1" stop-color="#bba16a"/></linearGradient>
          <linearGradient id="g"><stop offset="0" stop-color="#b98c2c"/><stop offset="1" stop-color="#c49c3e"/></linearGradient>
        </defs>
        <rect width="1920" height="40" fill="url(#w)"/>
        <path d="M1060 0H1920V40H1068z" fill="url(#s)"/>
        <path d="M1685 0H1920V40H1790z" fill="url(#g)"/>
        <path d="M1685 0h30l100 40h-25z" fill="#b48a30"/>
      </svg>
      <button class="start" aria-label="Start"><ui-icon name="windows" size="28"></ui-icon></button>
      <div class="apps">
        ${PINNED.map((n) => html`<button aria-label=${n} class=${n === "chrome" ? "focus" : n === "skype" ? "open" : ""}><ui-icon name=${n} size="32"></ui-icon></button>`)}
      </div>
      <div class="tray">${TRAY.map((n) => html`<ui-icon name=${n}></ui-icon>`)}</div>
      <div class="text lang">ENG<br />US</div>
      <div class="text clock">11:10 PM<br />2/19/2020</div>
    `;
  }
}

@customElement("app-root")
class AppRoot extends LitElement {
  static styles = css`
    :host { display: flex; flex-direction: column; height: 100vh; overflow: hidden; }
  `;
  render() {
    return html`<browser-chrome></browser-chrome><problem-page></problem-page><task-bar></task-bar>`;
  }
}
